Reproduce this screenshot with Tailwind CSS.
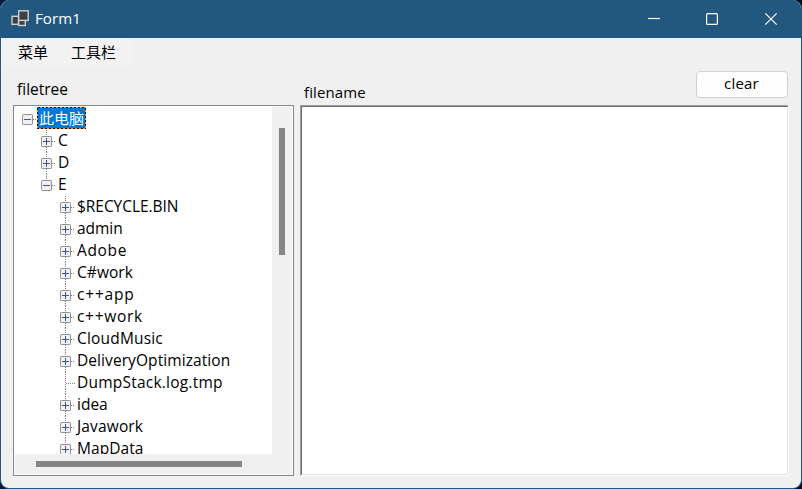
<!DOCTYPE html>
<html lang="zh-CN">
<head>
<meta charset="utf-8">
<title>Form1</title>
<script src="https://cdn.jsdelivr.net/npm/@tailwindcss/browser@4"></script>
</head>
<body class="h-[489px] w-[802px] overflow-hidden bg-[linear-gradient(90deg,#10173f_50%,#020c1c_50%)] font-['Open_Sans','Noto_Sans_CJK_SC',sans-serif] text-[15px] leading-[22px] text-black">
<div class="flex h-[489px] w-[802px] flex-col overflow-hidden rounded-[9px] border border-t-0 border-[#22587f] bg-[#f0f0f0]">
  <header class="flex h-[38px] shrink-0 items-center bg-[#22587f] text-white">
    <svg class="ml-[10px] h-[18px] w-[18px]" viewBox="0 0 18 18" fill="#404043" stroke="#c9d0d6" stroke-width="1.4"><rect x="1" y="6.300" width="6.500" height="8"/><rect x="7.700" y="10" width="6.600" height="5.500"/><rect x="7.700" y=".8" width="9.500" height="9.600"/></svg>
    <span class="ml-[6px] w-20 pb-[2px] tracking-[0.1px]">Form1</span>
    <svg class="ml-auto h-[38px] w-[174px]" viewBox="0 0 174 38" fill="none" stroke="white" stroke-width="1.2"><path d="M21 18.500H33"/><rect x="79.600" y="13.600" width="10.800" height="10.800" rx="1"/><path d="M138.300 13.300L149.700 24.700M149.700 13.300L138.300 24.700"/></svg>
  </header>
  <nav class="flex h-[28px] w-[130px] shrink-0 items-center gap-[23px] bg-[#f2f2f2] pl-[17px]"><span>菜单</span><span>工具栏</span></nav>
  <main class="flex">
    <section class="ml-[12px] w-[281px]">
      <h2 class="h-[39px] pl-1 pt-[12px] text-[15.500px]">filetree</h2>
      <div class="flex h-[371px] flex-col border border-[#828790] bg-white p-px">
        <div class="flex h-[347px]">
          <ul id="tree" class="h-[347px] w-[257px] overflow-hidden whitespace-nowrap pt-px"></ul>
          <div class="w-5 bg-[#f0f0f0] pl-[7px] pt-[21px]"><div class="h-[127px] w-[6px] bg-[#858585]"></div></div>
        </div>
        <div class="h-5 bg-[#f0f0f0] pl-[21px] pt-[7px]"><div class="h-[6px] w-[206px] bg-[#858585]"></div></div>
      </div>
    </section>
    <section class="ml-[6px] w-[489px]">
      <div class="flex h-[39px] justify-between">
        <h2 class="pl-[4px] pt-[15px] tracking-[0.120px]">filename</h2>
        <button class="mr-px mt-[5px] h-[27px] w-[92px] rounded-[4px] border border-[#d0d0d0] bg-[#fdfdfd] pb-[3px] pr-px leading-[22px] tracking-[0.200px]">clear</button>
      </div>
      <div class="h-[371px] w-[489px] border border-b-white border-l-[#a0a0a0] border-r-white border-t-[#a0a0a0]"><div class="h-full border border-b-[#e3e3e3] border-l-[#696969] border-r-[#e3e3e3] border-t-[#696969] bg-white"></div></div>
    </section>
  </main>
</div>
<script>
// name, depth, expander sign, letter spacing in pixels
const rows = [
  ["此电脑", 0, "-", 0], ["C", 1, "+", 0], ["D", 1, "+", 0], ["E", 1, "-", 0],
  ["$RECYCLE.BIN", 2, "+", -0.05], ["admin", 2, "+", -0.05], ["Adobe", 2, "+", 0.65], ["C#work", 2, "+", 0.05],
  ["c++app", 2, "+", 0.8], ["c++work", 2, "+", 0.7], ["CloudMusic", 2, "+", 0.18], ["DeliveryOptimization", 2, "+", 0.08],
  ["DumpStack.log.tmp", 2, "", 0.22], ["idea", 2, "+", 0], ["Javawork", 2, "+", 0.15], ["MapData", 2, "+", 0.05]
];
const indent = ["pl-[7px]", "pl-[26px]", "pl-[45px]"];
const dotsV = "w-px bg-[repeating-linear-gradient(180deg,#808080_0_1px,transparent_1px_2px)]";
const dotsH = "h-px bg-[repeating-linear-gradient(90deg,#808080_0_1px,transparent_1px_2px)]";
document.getElementById("tree").innerHTML = rows.map(([name, level, sign, spacing]) => {
  const box = sign
    ? `<svg class="h-[11px] w-[11px]" viewBox="0 0 11 11"><rect x=".5" y=".5" width="10" height="10" rx=".7" fill="#f1f1f1" stroke="#919191"/><path d="M2 5.500H9${sign === "+" ? "M5.500 2V9" : ""}" stroke="#3a55a0"/></svg>`
    : `<div class="h-[11px] ${dotsV}"></div>`;
  const top = level ? `<div class="h-[6px] ${dotsV}"></div>` : `<div class="h-[6px]"></div>`;
  const last = level === 0 || name === "E";
  const bottom = last ? `<div class="h-[5px]"></div>` : `<div class="h-[5px] ${dotsV}"></div>`;
  const label = level === 0
    ? `<span class="-mt-px flex h-[22px] w-[49px] bg-[repeating-linear-gradient(135deg,#ff8728_0_1.414px,#111111_1.414px_2.828px)] p-px"><span class="flex flex-1 items-center bg-[#0078d7] pl-px text-white">${name}</span></span>`
    : `<span class="-mt-px ml-[2px] text-[15.500px]" style="letter-spacing:${spacing}px">${name}</span>`;
  return `<li class="flex h-[22px] ${indent[level]}"><div class="flex w-[11px] shrink-0 flex-col items-center">${top}${box}${bottom}</div><div class="mt-[11px] shrink-0 ${sign ? "w-1" : "-ml-[5px] w-[9px]"} ${dotsH}"></div>${label}</li>`;
}).join("");
</script>
</body>
</html>
